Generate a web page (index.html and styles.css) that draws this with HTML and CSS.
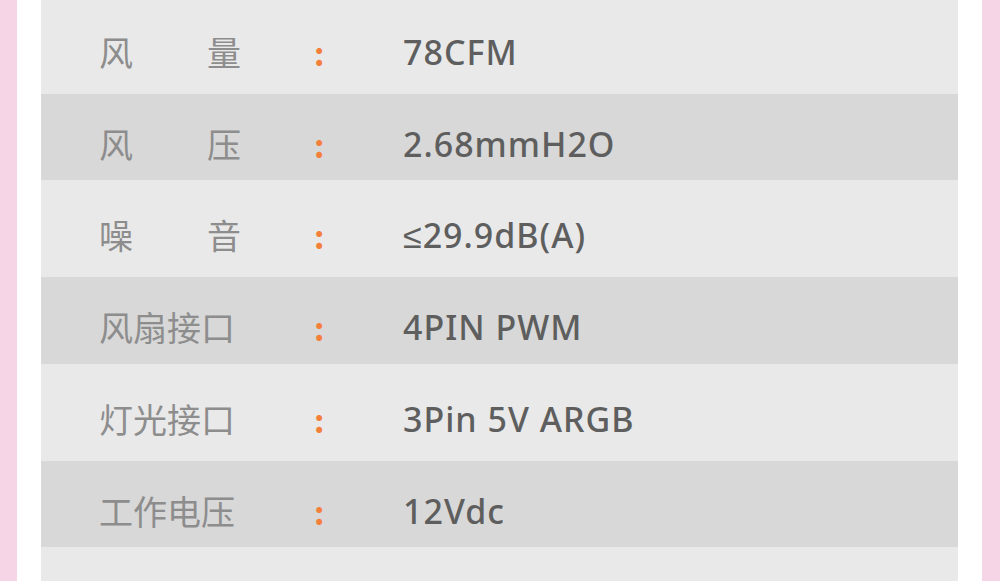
FILE: index.html
```html
<!DOCTYPE html>
<html lang="zh-CN">
<head>
<meta charset="utf-8">
<link rel="stylesheet" href="styles.css">
</head>
<body>
<div class="panel">
  <div class="table">
    <div class="row light first"><span class="label two">风量</span><span class="colon">:</span><span class="value">78CFM</span></div>
    <div class="row dark"><span class="label two">风压</span><span class="colon">:</span><span class="value">2.68mmH2O</span></div>
    <div class="row light"><span class="label two">噪音</span><span class="colon">:</span><span class="value">≤29.9dB(A)</span></div>
    <div class="row dark tall"><span class="label">风扇接口</span><span class="colon">:</span><span class="value">4PIN PWM</span></div>
    <div class="row light"><span class="label">灯光接口</span><span class="colon">:</span><span class="value">3Pin 5V ARGB</span></div>
    <div class="row dark"><span class="label">工作电压</span><span class="colon">:</span><span class="value">12Vdc</span></div>
    <div class="row light"></div>
  </div>
</div>
</body>
</html>
```

FILE: styles.css
```css
html, body {
  margin: 0;
  padding: 0;
  background: #f6d5e6;
  height: 581px;
  overflow: hidden;
}

.panel {
  margin: 0 18px 0 17px;
  padding: 0 24px;
  background: #ffffff;
  height: 581px;
  overflow: hidden;
}

.table {
  display: flex;
  flex-direction: column;
  margin-top: -3px;
}

.row {
  display: flex;
  flex-shrink: 0;
  align-items: center;
  padding: 13px 0 0 59px;
  box-sizing: border-box;
}

.row.light {
  background: #e9e9e9;
  height: 97px;
}

.row.dark {
  background: #d8d8d8;
  height: 86px;
}

.row.dark.tall {
  height: 87px;
}

.label {
  width: 136px;
  margin-left: -1px;
  font-family: "Noto Sans CJK SC", sans-serif;
  font-size: 34px;
  color: #8d8d8d;
  text-align: justify;
  text-align-last: justify;
  line-height: 1;
}

.label.two {
  width: 142px;
  margin-right: -6px;
}

.colon {
  margin-left: 79px;
  width: 88px;
  font-family: "Noto Sans CJK SC", sans-serif;
  font-size: 32px;
  font-weight: 700;
  color: #f47f3a;
  line-height: 1;
}

.value {
  margin-left: 1px;
  font-family: "Noto Sans", sans-serif;
  font-weight: 500;
  font-size: 34px;
  letter-spacing: 1px;
  color: #5e5e5e;
  line-height: 1;
}
```
